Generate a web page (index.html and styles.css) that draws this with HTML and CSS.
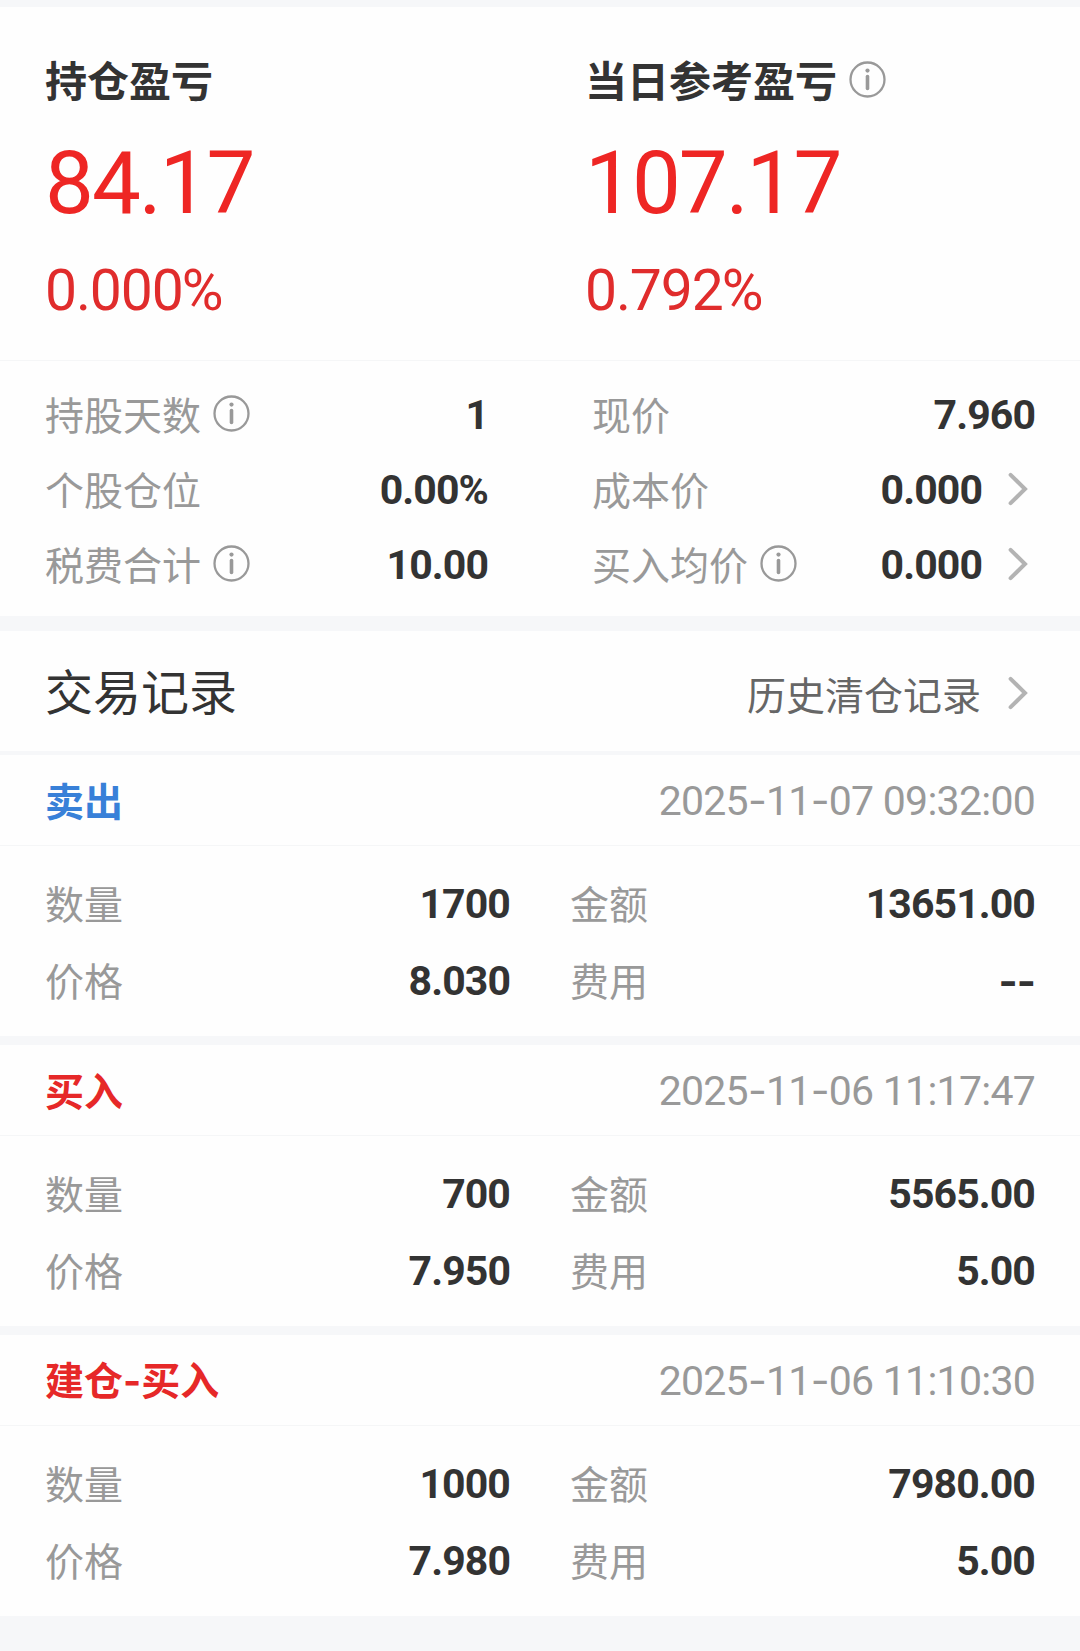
FILE: index.html
```html
<!DOCTYPE html>
<html lang="zh-CN">
<head>
<meta charset="utf-8">
<title>持仓盈亏</title>
<link rel="stylesheet" href="styles.css">
</head>
<body>
<svg class="defs" width="0" height="0" aria-hidden="true">
  <symbol id="info" viewBox="0 0 37 37">
    <circle cx="18.5" cy="18.5" r="17" fill="none" stroke="currentColor" stroke-width="2.3"/>
    <circle cx="18.5" cy="9.6" r="2.1" fill="currentColor"/>
    <path d="M18.5 15.5V27.5" stroke="currentColor" stroke-width="3.6" stroke-linecap="round"/>
  </symbol>
  <symbol id="chevron" viewBox="0 0 20 34">
    <path d="M2.6 2.8L17 17L2.6 31.2" fill="none" stroke="currentColor" stroke-width="4" stroke-linecap="round" stroke-linejoin="miter"/>
  </symbol>
</svg>
<main class="page">
  <section class="profit">
    <div class="profit-col">
      <h2 class="profit-title">持仓盈亏</h2>
      <div class="profit-value">84.17</div>
      <div class="profit-rate">0.000<span class="percent">%</span></div>
    </div>
    <div class="profit-col">
      <h2 class="profit-title">当日参考盈亏<svg class="info"><use href="#info"/></svg></h2>
      <div class="profit-value">107.17</div>
      <div class="profit-rate">0.792<span class="percent">%</span></div>
    </div>
  </section>

  <section class="stats">
    <div class="stat"><span class="label">持股天数<svg class="info"><use href="#info"/></svg></span><span class="num">1</span></div>
    <div class="stat"><span class="label">现价</span><span class="num">7.960</span></div>
    <div class="stat"><span class="label">个股仓位</span><span class="num">0.00%</span></div>
    <div class="stat"><span class="label">成本价</span><span class="num">0.000<svg class="chevron"><use href="#chevron"/></svg></span></div>
    <div class="stat"><span class="label">税费合计<svg class="info"><use href="#info"/></svg></span><span class="num">10.00</span></div>
    <div class="stat"><span class="label">买入均价<svg class="info"><use href="#info"/></svg></span><span class="num">0.000<svg class="chevron"><use href="#chevron"/></svg></span></div>
  </section>

  <header class="records-head">
    <h2 class="records-title">交易记录</h2>
    <a class="history">历史清仓记录<svg class="chevron"><use href="#chevron"/></svg></a>
  </header>

  <article class="record">
    <header class="record-head"><h3 class="side sell">卖出</h3><time class="time">2025<span class="dash">-</span>11<span class="dash">-</span>07 09:32:00</time></header>
    <div class="record-body">
      <div class="field"><span class="label">数量</span><span class="num">1700</span></div>
      <div class="field"><span class="label">金额</span><span class="num">13651.00</span></div>
      <div class="field"><span class="label">价格</span><span class="num">8.030</span></div>
      <div class="field"><span class="label">费用</span><span class="num"><span class="dash">--</span></span></div>
    </div>
  </article>

  <article class="record">
    <header class="record-head"><h3 class="side buy">买入</h3><time class="time">2025<span class="dash">-</span>11<span class="dash">-</span>06 11:17:47</time></header>
    <div class="record-body">
      <div class="field"><span class="label">数量</span><span class="num">700</span></div>
      <div class="field"><span class="label">金额</span><span class="num">5565.00</span></div>
      <div class="field"><span class="label">价格</span><span class="num">7.950</span></div>
      <div class="field"><span class="label">费用</span><span class="num">5.00</span></div>
    </div>
  </article>

  <article class="record">
    <header class="record-head"><h3 class="side buy">建仓<span class="dash">-</span>买入</h3><time class="time">2025<span class="dash">-</span>11<span class="dash">-</span>06 11:10:30</time></header>
    <div class="record-body">
      <div class="field"><span class="label">数量</span><span class="num">1000</span></div>
      <div class="field"><span class="label">金额</span><span class="num">7980.00</span></div>
      <div class="field"><span class="label">价格</span><span class="num">7.980</span></div>
      <div class="field"><span class="label">费用</span><span class="num">5.00</span></div>
    </div>
  </article>
</main>
</body>
</html>
```
FILE: styles.css
```css
* { box-sizing: border-box; }

body {
  margin: 0;
  background: #f6f7f9;
  color: #333;
  font-family: "Noto Sans CJK SC", sans-serif;
}

h2, h3 { margin: 0; }

.defs { display: block; height: 0; }

.page {
  width: 1080px;
  padding-top: 7px;
}

.info {
  width: 37px;
  height: 37px;
  margin-left: 12px;
  color: #999;
  flex: none;
}

.chevron {
  width: 20px;
  height: 34px;
  color: #b3b3b3;
  flex: none;
}

/* Profit summary */
.profit {
  display: grid;
  grid-template-columns: 540px 1fr;
  height: 354px;
  padding: 42px 0 0 45px;
  background: #fefefe;
  border-bottom: 1px solid #f5f6f7;
}

.profit-title {
  display: flex;
  align-items: center;
  height: 60px;
  font-size: 42px;
  line-height: 60px;
  font-weight: 700;
}

.profit-title .info { margin: 1px 0 0 12px; }

.profit-value {
  margin-top: 24px;
  height: 100px;
  font: 400 87px/100px Roboto, sans-serif;
  letter-spacing: -2px;
  color: #ee2624;
}

.profit-rate {
  margin-top: 23px;
  height: 70px;
  font: 400 57px/70px Roboto, sans-serif;
  letter-spacing: -1.1px;
  color: #e02c2c;
}

.percent { margin-left: -1px; }

/* Label and value pairs */
.label {
  display: flex;
  align-items: center;
  padding-bottom: 4px;
  font-size: 39px;
  color: #999;
}

.label .info { margin-top: 1px; }

.num {
  display: flex;
  align-items: center;
  font-family: Roboto, sans-serif;
  font-size: 41px;
  font-weight: 700;
  letter-spacing: -0.9px;
}

.num .chevron { margin: -2px 7px 0 26px; }

.stats {
  display: grid;
  grid-template-columns: 443px 443px;
  grid-auto-rows: 75px;
  column-gap: 104px;
  height: 255px;
  padding: 16px 45px 14px;
  background: #fefefe;
}

.stat, .field {
  display: flex;
  justify-content: space-between;
  align-items: center;
  line-height: 56px;
}

/* Trade records */
.records-head {
  display: flex;
  justify-content: space-between;
  align-items: center;
  height: 120px;
  margin-top: 15px;
  padding: 0 52px 0 45px;
  background: #fefefe;
}

.records-title {
  padding-bottom: 4px;
  font-size: 48px;
  line-height: 70px;
  font-weight: 400;
}

.history {
  display: flex;
  align-items: center;
  gap: 27px;
  padding-top: 3px;
  font-size: 39px;
  line-height: 56px;
  color: #666;
}

.record {
  height: 281px;
  margin-top: 9px;
  background: #fefefe;
}

.records-head + .record { margin-top: 4px; }

.record-head {
  display: flex;
  justify-content: space-between;
  align-items: center;
  height: 91px;
  padding: 0 45px;
  border-bottom: 1px solid #f5f6f7;
}

.side {
  padding-bottom: 2px;
  font-size: 39px;
  line-height: 56px;
  font-weight: 700;
}

.sell { color: #3880d8; }
.buy { color: #e62828; }

.time {
  font: 400 41px/56px Roboto, sans-serif;
  letter-spacing: -0.74px;
  color: #999;
}

.dash { font-family: Inter, sans-serif; }

.record-body {
  display: grid;
  grid-template-columns: 465px 465px;
  grid-auto-rows: 77px;
  column-gap: 60px;
  padding: 19px 45px 0;
}
```
